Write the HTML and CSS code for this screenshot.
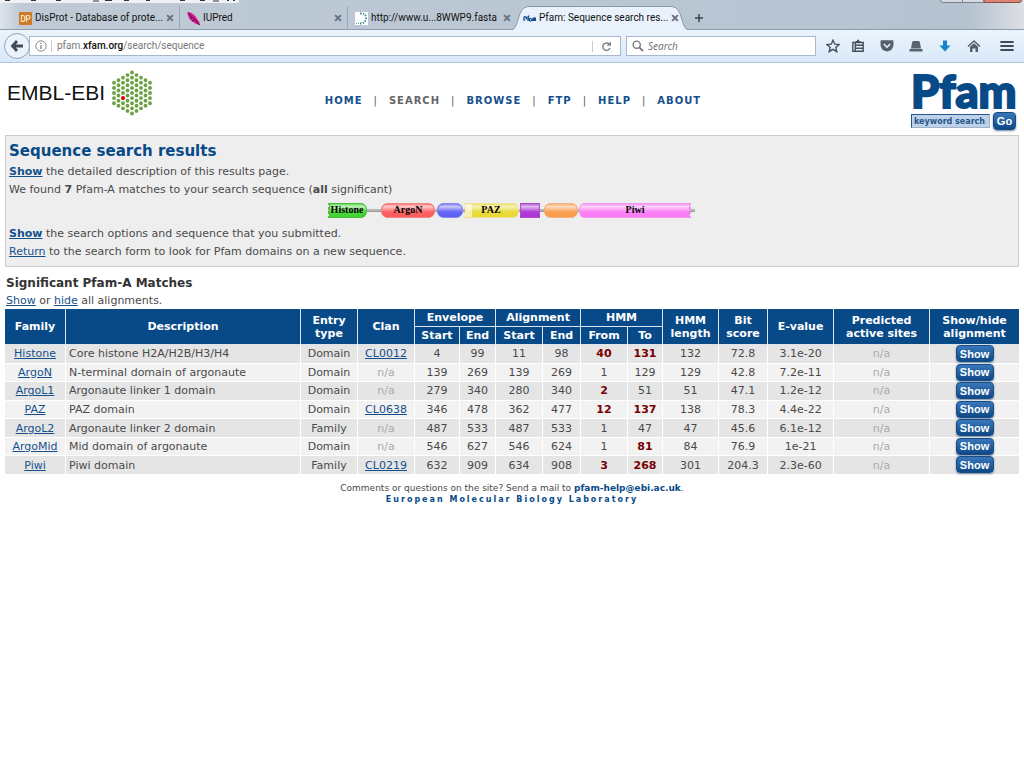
FILE: index.html
```html
<!DOCTYPE html>
<html lang="en">
<head>
<meta charset="utf-8">
<title>Pfam: Sequence search results</title>
<link rel="stylesheet" href="styles.css">
</head>
<body>
<div class="chrome">
  <div class="tabstrip">
    <svg class="title-remnant" width="240" height="3" viewBox="0 0 240 3" aria-hidden="true"><path d="M0 0H239V2Q239 3 236 3H0Z" fill="#eef1f5"/><path d="M5 .5h5M31 .5h5M56 .5h5M93 1h6M105 .5h7M124 .5h5M146 .5h4M180 .5h5M200 .5h5M213 1h6M227 .5h2M233 .5h2" stroke="#333" stroke-width="1.2"/></svg>
    <svg class="window-buttons" width="84" height="3" viewBox="0 0 84 3" aria-hidden="true"><path d="M.5 0Q.5 2.500 3 2.500H44V0" fill="#d5dbe2" stroke="#777f89"/><path d="M22.500 0V2" stroke="#777f89"/><path d="M44 0V2.500H79Q81.500 2.500 81.500 0" fill="#d98474" stroke="#8a4c45"/></svg>
    <div class="tab">
      <svg width="13" height="13" viewBox="0 0 13 13"><rect width="13" height="13" rx="1" fill="#cf7a24"/><path d="M2.500 3.500v6h1q2.500 0 2.500-3t-2.500-3zM7.500 10V3.500h1.500q2 0 2 1.800t-2 1.800h-1.500" fill="none" stroke="#f7dfc0" stroke-width="1.200"/></svg>
      <span class="tab-title">DisProt - Database of prote...</span><button class="close" aria-label="Close tab">×</button>
    </div>
    <div class="tab">
      <svg width="13" height="13" viewBox="0 0 13 13"><path d="M.5 0Q5 0 8.500 4.500L12.500 10.500V13L9 12Q0 7 .5 0Z" fill="#d3168c"/><path d="M1 1L13 13M3 6l2 0M5 9l2-1" stroke="#421337" stroke-width=".9"/></svg>
      <span class="tab-title">IUPred</span><button class="close" aria-label="Close tab">×</button>
    </div>
    <div class="tab last">
      <svg width="13" height="13" viewBox="0 0 13 13"><rect width="13" height="13" fill="#fff"/><path d="M5 1.500Q11 1 11 6T5 11.500" fill="none" stroke="#3c8fa5" stroke-width="2" stroke-dasharray="1.400 1.300"/><path d="M1 11.500h3" stroke="#6ba96d" stroke-dasharray="1 1"/></svg>
      <span class="tab-title">http://www.u...8WWP9.fasta</span><button class="close" aria-label="Close tab">×</button>
    </div>
    <div class="tab active">
      <svg class="tab-shape" viewBox="0 0 176 24" preserveAspectRatio="none"><path d="M0 24C7 23 5 1 16 .5H160C171 1 169 23 176 24Z" fill="#e9f2fc"/><path d="M0 23.500C7 23 5 1 16 .5H160C171 1 169 23 176 23.500" fill="none" stroke="#8897a8"/></svg>
      <svg width="13" height="13" viewBox="0 0 13 13"><path d="M1 9V5.500a1.300 1.300 0 1 1 1.500 1.700M5 9V5q0-1 1.300-1M4.300 6h2M8 9a1.200 1.200 0 1 1 .7-1.500V9M10 9V6.500q1-1 1.300 0V9V6.500q1-1 1.300 0V9" fill="none" stroke="#12508f" stroke-width="1.300"/></svg>
      <span class="tab-title">Pfam: Sequence search res...</span><button class="close" aria-label="Close tab">×</button>
    </div>
    <button class="new-tab" aria-label="New tab"><svg width="10" height="10" viewBox="0 0 10 10"><path d="M5 1V9M1 5H9" stroke="#3c4650" stroke-width="1.500"/></svg></button>
  </div>
  <div class="toolbar">
    <button class="back" aria-label="Back"><svg width="14" height="14" viewBox="0 0 14 14"><path d="M7 2L2.500 7L7 12M3 7H13" fill="none" stroke="#404a54" stroke-width="2.800"/></svg></button>
    <div class="urlbar">
      <svg width="12" height="12" viewBox="0 0 12 12"><circle cx="6" cy="6" r="5.200" fill="none" stroke="#8b8b8b"/><path d="M6 5v4M6 2.700v1.300" stroke="#777" stroke-width="1.200"/></svg>
      <a class="url" href="#">pfam.<b>xfam.org</b>/search/sequence</a>
      <button class="reload" aria-label="Reload"><svg width="11" height="11" viewBox="0 0 11 11"><path d="M8.300 3.200A3.700 3.700 0 1 0 9 7" fill="none" stroke="#7c838a" stroke-width="1.500"/><path d="M5.500 4.800H10V.5Z" fill="#7c838a"/></svg></button>
    </div>
    <label class="search"><svg width="12" height="12" viewBox="0 0 12 12"><circle cx="4.700" cy="4.700" r="3.600" fill="none" stroke="#777" stroke-width="1.400"/><path d="M7.300 7.300L11 11" stroke="#777" stroke-width="1.800"/></svg><input type="text" placeholder="Search" aria-label="Search"></label>
    <div class="tools">
      <button aria-label="Bookmark"><svg width="14" height="14" viewBox="0 0 14 14"><path d="M7 1.200L8.800 5.200L13 5.600L9.800 8.400L10.800 12.700L7 10.400L3.200 12.700L4.200 8.400L1 5.600L5.200 5.200Z" fill="none" stroke="#46505a" stroke-width="1.400"/></svg></button>
      <button aria-label="Bookmarks list"><svg width="14" height="14" viewBox="0 0 14 14"><path d="M1.800 3.500H12.200V12.300H1.800ZM4 6.200H12M4 9.200H12M4.300 4V12" fill="none" stroke="#46505a" stroke-width="1.400"/><path d="M4.500 3V2H6V.8H8V2H9.500V3Z" fill="#46505a"/></svg></button>
      <button aria-label="Pocket"><svg width="14" height="14" viewBox="0 0 14 14"><path d="M.5 2Q.5 1.300 1.200 1.300H12.800Q13.500 1.300 13.500 2V6Q13 11.500 7 12.500Q1 11.500 .5 6Z" fill="#56606a"/><path d="M3.800 5L7 8.200L10.200 5" fill="none" stroke="#e7f1fb" stroke-width="1.600"/></svg></button>
      <button aria-label="Add-on"><svg width="14" height="14" viewBox="0 0 14 14"><path d="M4.500 2H9.500Q10.500 2 10.800 3L12 9.500H2L3.200 3Q3.500 2 4.500 2ZM.5 10H13.500V12.500H.5Z" fill="#59636d"/></svg></button>
      <button aria-label="Downloads"><svg width="14" height="14" viewBox="0 0 14 14"><path d="M5 1.500H9V6.500H12.500L7 12.500L1.500 6.500H5Z" fill="#1784c7"/></svg></button>
      <button aria-label="Home"><svg width="14" height="14" viewBox="0 0 14 14"><path d="M1 7.500L7 2L13 7.500" fill="none" stroke="#56606a" stroke-width="1.600"/><path d="M3 7.800L7 4.200L11 7.800V13H8.500V9.500H5.500V13H3Z" fill="#56606a"/></svg></button>
      <button class="menu" aria-label="Menu"><svg width="14" height="14" viewBox="0 0 14 14"><path d="M1 3H13M1 7H13M1 11H13" stroke="#414b55" stroke-width="1.800" stroke-linecap="round"/></svg></button>
    </div>
  </div>
</div>

<div class="page">
  <header class="site-header">
    <a class="embl" href="#"><span>EMBL-EBI</span><svg width="42" height="46" viewBox="0 0 42 46" aria-hidden="true"><g stroke="#6ca244" stroke-width="3.900" stroke-linecap="round" stroke-dasharray="0 5.120"><path d="M3 12.760V33.300"/><path d="M7.500 10.200V35.900"/><path d="M12 7.640V38.400"/><path d="M16.500 5.080V41"/><path d="M21 2.520V43.600"/><path d="M25.500 5.080V41"/><path d="M30 7.640V38.400"/><path d="M34.500 10.200V35.900"/><path d="M39 12.760V33.300"/></g><circle cx="12" cy="28.120" r="2" fill="#e00"/></svg></a>
    <nav class="nav"><a href="#">HOME</a><i>|</i><a class="current" href="#">SEARCH</a><i>|</i><a href="#">BROWSE</a><i>|</i><a href="#">FTP</a><i>|</i><a href="#">HELP</a><i>|</i><a href="#">ABOUT</a></nav>
    <div class="side"><div class="brand">
      <a class="pfam" href="#">Pfam</a>
      <form class="keyword"><input type="text" value="keyword search" aria-label="keyword search"><button type="button">Go</button></form>
    </div></div>
  </header>

  <section class="summary">
    <h1>Sequence search results</h1>
    <p><a href="#"><b>Show</b></a> the detailed description of this results page.</p>
    <p>We found <b>7</b> Pfam-A matches to your search sequence (<b>all</b> significant)</p>
    <svg class="domains" width="370" height="18" viewBox="0 0 370 18">
      <defs><linearGradient id="shine" x1="0" y1="0" x2="0" y2="1"><stop offset="0" stop-color="#fff" stop-opacity=".3"/><stop offset=".2" stop-color="#fff" stop-opacity=".7"/><stop offset=".6" stop-color="#fff" stop-opacity=".15"/><stop offset="1" stop-color="#fff" stop-opacity=".1"/></linearGradient></defs>
      <path d="M1 9.500H368" stroke="#9a9a9a" stroke-width="3"/><path d="M1 9H368" stroke="#d5d5d5"/>
      <g stroke-width="1">
        <path d="M1 2.500H34Q39.500 3 39.500 9.500T34 16.500H1L3 14L1 12L3 9.500L1 7L3 5Z" fill="#2bd01b" stroke="#48bd37"/>
        <rect x="54.500" y="2.500" width="53" height="14" rx="6" fill="#fa4848" stroke="#ee8585"/>
        <rect x="110.500" y="2.500" width="25" height="14" rx="6" fill="#4b4bf5" stroke="#8a8aed"/>
        <path d="M137 2.500H186Q191.500 3 191.500 9.500T186 16.500H137L139 14L137 12L139 9.500L137 7L139 5Z" fill="#e6d41b" stroke="#eee29a"/>
        <rect x="193.500" y="2.500" width="19" height="14" fill="#a51bd3" stroke="#a750c4"/>
        <rect x="217.500" y="2.500" width="33" height="14" rx="6" fill="#fa8e35" stroke="#efb488"/>
        <path d="M257 2.500H364L362 5L364 7L362 9.500L364 12L362 14L364 16.500H257Q252.500 16 252.500 9.500T257 2.500Z" fill="#fa6cf6" stroke="#ef9bed"/>
      </g>
      <g fill="url(#shine)"><path d="M3 3H34Q39 4 39 9T34 16H3Z"/><rect x="55" y="3" width="52" height="13" rx="6"/><rect x="111" y="3" width="24" height="13" rx="6"/><path d="M139 3H186Q191 4 191 9T186 16H139Z"/><rect x="194" y="3" width="18" height="13"/><rect x="218" y="3" width="32" height="13" rx="6"/><path d="M257 3H362V16H257Q253 15 253 9T257 3Z"/></g>
      <path d="M138 3H145V16H138Z" fill="#fff" opacity=".6"/>
      <g class="domain-labels"><text x="20" y="12">Histone</text><text x="81" y="12">ArgoN</text><text x="164" y="12">PAZ</text><text x="308" y="12">Piwi</text></g>
    </svg>
    <p><a href="#"><b>Show</b></a> the search options and sequence that you submitted.</p>
    <p><a href="#">Return</a> to the search form to look for Pfam domains on a new sequence.</p>
  </section>

  <h2>Significant Pfam-A Matches</h2>
  <p class="toggle"><a href="#">Show</a> or <a href="#">hide</a> all alignments.</p>
  <table class="matches">
    <colgroup><col class="w61"><col class="w235"><col class="w57"><col class="w57"><col class="w45"><col class="w36"><col class="w47"><col class="w38"><col class="w47"><col class="w35"><col class="w56"><col class="w49"><col class="w66"><col class="w96"><col class="w89"></colgroup>
    <thead>
      <tr><th rowspan="2">Family</th><th rowspan="2">Description</th><th rowspan="2">Entry<br>type</th><th rowspan="2">Clan</th><th colspan="2">Envelope</th><th colspan="2">Alignment</th><th colspan="2">HMM</th><th rowspan="2">HMM<br>length</th><th rowspan="2">Bit<br>score</th><th rowspan="2">E-value</th><th rowspan="2">Predicted<br>active sites</th><th rowspan="2">Show/hide<br>alignment</th></tr>
      <tr><th>Start</th><th>End</th><th>Start</th><th>End</th><th>From</th><th>To</th></tr>
    </thead>
    <tbody>
      <tr><td><a href="#">Histone</a></td><td class="desc">Core histone H2A/H2B/H3/H4</td><td>Domain</td><td><a href="#">CL0012</a></td><td>4</td><td>99</td><td>11</td><td>98</td><td class="partial">40</td><td class="partial">131</td><td>132</td><td>72.8</td><td>3.1e-20</td><td class="na">n/a</td><td><button>Show</button></td></tr>
      <tr><td><a href="#">ArgoN</a></td><td class="desc">N-terminal domain of argonaute</td><td>Domain</td><td class="na">n/a</td><td>139</td><td>269</td><td>139</td><td>269</td><td>1</td><td>129</td><td>129</td><td>42.8</td><td>7.2e-11</td><td class="na">n/a</td><td><button>Show</button></td></tr>
      <tr><td><a href="#">ArgoL1</a></td><td class="desc">Argonaute linker 1 domain</td><td>Domain</td><td class="na">n/a</td><td>279</td><td>340</td><td>280</td><td>340</td><td class="partial">2</td><td>51</td><td>51</td><td>47.1</td><td>1.2e-12</td><td class="na">n/a</td><td><button>Show</button></td></tr>
      <tr><td><a href="#">PAZ</a></td><td class="desc">PAZ domain</td><td>Domain</td><td><a href="#">CL0638</a></td><td>346</td><td>478</td><td>362</td><td>477</td><td class="partial">12</td><td class="partial">137</td><td>138</td><td>78.3</td><td>4.4e-22</td><td class="na">n/a</td><td><button>Show</button></td></tr>
      <tr><td><a href="#">ArgoL2</a></td><td class="desc">Argonaute linker 2 domain</td><td>Family</td><td class="na">n/a</td><td>487</td><td>533</td><td>487</td><td>533</td><td>1</td><td>47</td><td>47</td><td>45.6</td><td>6.1e-12</td><td class="na">n/a</td><td><button>Show</button></td></tr>
      <tr><td><a href="#">ArgoMid</a></td><td class="desc">Mid domain of argonaute</td><td>Domain</td><td class="na">n/a</td><td>546</td><td>627</td><td>546</td><td>624</td><td>1</td><td class="partial">81</td><td>84</td><td>76.9</td><td>1e-21</td><td class="na">n/a</td><td><button>Show</button></td></tr>
      <tr><td><a href="#">Piwi</a></td><td class="desc">Piwi domain</td><td>Family</td><td><a href="#">CL0219</a></td><td>632</td><td>909</td><td>634</td><td>908</td><td class="partial">3</td><td class="partial">268</td><td>301</td><td>204.3</td><td>2.3e-60</td><td class="na">n/a</td><td><button>Show</button></td></tr>
    </tbody>
  </table>
  <footer class="footer">
    <p>Comments or questions on the site? Send a mail to <a href="#">pfam-help@ebi.ac.uk</a>.</p>
    <p class="lab"><a href="#">European Molecular Biology Laboratory</a></p>
  </footer>
</div>
</body>
</html>
```
FILE: styles.css
```css
* { box-sizing: border-box; }
body { margin: 0; background: #fff; color: #4a4a4a; font: 11px/18px "DejaVu Sans", Verdana, sans-serif; }
p, h1, h2 { margin: 0; }
a { color: #16508c; }
button { border: 0; padding: 0; background: none; font: inherit; color: inherit; }
svg { display: block; flex: none; }

/* Browser window */
.chrome { font-family: Roboto, "Noto Sans", sans-serif; color: #111; }
.tabstrip { position: relative; display: flex; height: 30px; padding: 6px 0 0 12px; background: linear-gradient(90deg, #dfe5ec 0, #bfcad6 20px, #b8c5d2 700px, #b5c2cf 970px, #dce0e4 100%); border-bottom: 1px solid #8e9dad; }
.title-remnant { position: absolute; left: 0; top: 0; }
.window-buttons { position: absolute; right: 0; top: 0; }
.tab { position: relative; display: flex; align-items: center; gap: 3px; flex: 0 1 168px; min-width: 0; height: 24px; padding: 0 5px 0 7px; border-right: 1px solid #9aa8b7; font-size: 10px; }
.tab.last, .tab.active { border-right: 0; }
.tab > * { position: relative; }
.tab .tab-shape { position: absolute; left: -4px; top: 0; width: calc(100% + 8px); height: 24px; }
.tab-title { flex: 1; white-space: nowrap; overflow: hidden; }
.close { font-size: 15px; line-height: 15px; font-weight: bold; color: #66717d; }
.new-tab { padding: 0 10px; }
.toolbar { display: flex; align-items: center; height: 33px; padding: 0 10px 0 4px; background: linear-gradient(#ebf4fd, #d9e8f8); border-bottom: 1px solid #b0c4d8; }
.back { position: relative; display: grid; place-items: center; flex: none; width: 26px; height: 26px; border: 1px solid #93a4b6; border-radius: 50%; background: #eaf3fc; }
.urlbar { display: flex; align-items: center; flex: 1 1 592px; height: 20px; margin-left: -1px; padding-left: 5px; border: 1px solid #aab9c9; background: #fff; }
.url { flex: 1; margin-left: 4px; padding-left: 5px; border-left: 1px solid #ccc; font-size: 10px; line-height: 12px; color: #777; text-decoration: none; }
.url b { font-weight: 500; color: #111; }
.reload { padding: 0 8px; border-left: 1px solid #ccc; }
.search { display: flex; align-items: center; gap: 4px; flex: 0 1 190px; height: 20px; margin-left: 5px; padding: 0 5px; border: 1px solid #aab9c9; background: #fff; }
.search input { flex: 1; min-width: 0; padding: 0; border: 0; outline: 0; background: none; font: italic 10px/14px "Noto Sans", sans-serif; }
.search input::placeholder { color: #777; }
.tools { display: flex; flex: none; gap: 15px; margin-left: 10px; }
.tools button:first-child { margin-right: -4px; }
.menu { margin-left: 4px; }

/* Site header */
.page { padding: 0 5px; }
.site-header { display: flex; height: 72px; }
.embl { display: flex; flex: 1; gap: 6px; padding: 7px 0 0 2px; font: 21px/46px "Liberation Sans", Arial, sans-serif; color: #111; text-decoration: none; white-space: nowrap; }
.nav { display: flex; gap: 11px; padding-top: 29px; letter-spacing: 1px; font-size: 10px; white-space: nowrap; }
.nav a { font-weight: bold; text-decoration: none; }
.nav .current { color: #666; }
.nav i { font-style: normal; color: #555; }
.side { display: flex; flex: 1; justify-content: flex-end; }
.brand { width: 108px; padding: 8px 3px 0 0; }
.pfam { display: block; font: 900 45px/41px Lato, sans-serif; color: #084a88; text-decoration: none; -webkit-text-stroke: 2px #084a88; }
.keyword { display: flex; align-items: center; justify-content: space-between; }
.keyword input { width: 79px; height: 14px; padding: 0 2px; border: 1px solid #9eb2c8; border-top-color: #26568d; border-left-color: #26568d; background: #bdd2e8; color: #25558b; font: bold 8px/10px "DejaVu Sans", sans-serif; }
.keyword button, .matches button { border: 1px solid #164b83; border-radius: 4px; background: linear-gradient(#3978bb, #0e4888); box-shadow: 0 1px 2px #7188a0; color: #fff; font: bold 11px/14px "Liberation Sans", Arial, sans-serif; }
.keyword button { width: 23px; height: 18px; }

/* Results */
.summary { padding: 6px 3px 5px; border: 1px solid #ccc; background: #eee; }
.summary h1 { padding-bottom: 2px; color: #084a88; font-size: 15px; line-height: 19px; }
.domains { margin: 2px auto 6px; }
.domain-labels { font: bold 10px "Liberation Serif", serif; fill: #000; text-anchor: middle; }
h2 { margin-top: 8px; padding-left: 1px; font-size: 12px; line-height: 17px; color: #333; }
.toggle { padding-left: 1px; line-height: 17px; }
.matches { width: 100%; height: 166px; table-layout: fixed; border-collapse: separate; border-spacing: 0; text-align: center; }
.matches th, .matches td { padding: 0; border-right: 1px solid #fff; border-bottom: 1px solid #fff; overflow: visible; }
.matches th { height: 18px; background: #084a88; color: #fff; line-height: 13px; font-size: 11px; }
.matches thead th { border-color: #dce5ee; }
.matches td { height: 18px; line-height: 17px; }
.matches td:last-child { vertical-align: top; }
.matches tr > :last-child:not(:nth-child(6)) { border-right: 0; }
.matches tbody tr:nth-child(odd) { background: #e5e5e5; }
.matches tbody tr:nth-child(even) { background: #f2f2f2; }
.matches .desc { padding-left: 3px; text-align: left; }
.matches .na { color: #aaa; }
.matches .partial { color: #700; font-weight: bold; }
.matches button { display: block; width: 38px; height: 17px; margin: 0 auto; }
.w61 { width: 61px; } .w235 { width: 235px; } .w57 { width: 57px; } .w45 { width: 45px; }
.w36 { width: 36px; } .w47 { width: 47px; } .w38 { width: 38px; } .w35 { width: 35px; }
.w56 { width: 56px; } .w49 { width: 49px; } .w66 { width: 66px; } .w96 { width: 96px; } .w89 { width: 89px; }
.footer { padding-top: 8px; text-align: center; font-size: 9px; line-height: 11px; }
.footer a { font-weight: bold; text-decoration: none; color: #084a88; }
.lab { font-size: 8px; letter-spacing: 2px; }
```
